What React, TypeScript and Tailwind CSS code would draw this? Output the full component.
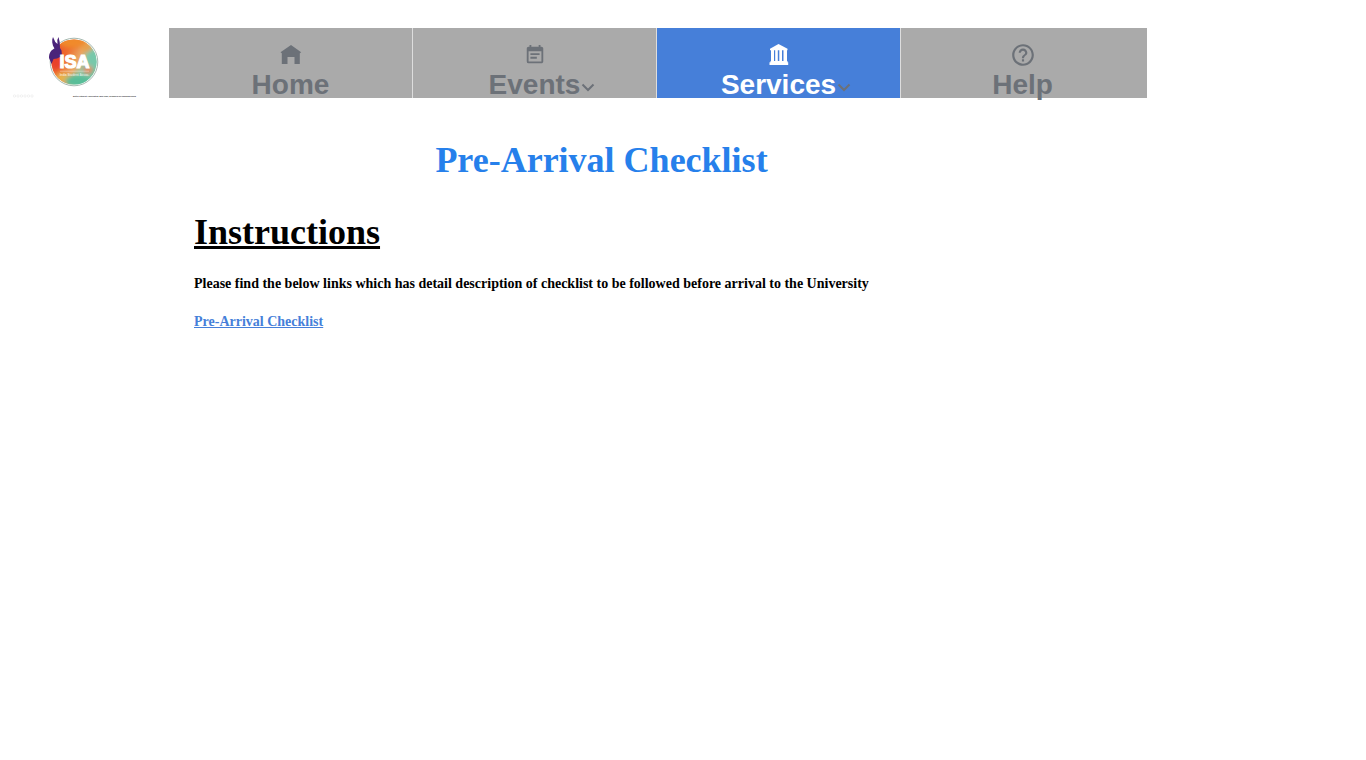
import React from "react";
import { MdEventNote, MdHelpOutline } from "react-icons/md";

function Logo() {
  return (
    <svg viewBox="0 0 169 70" className="block w-full" role="img" aria-label="ISA">
      <defs>
        <clipPath id="disc">
          <circle cx="74" cy="34" r="22.6" />
        </clipPath>
        <linearGradient id="paint" x1="0" y1="0.25" x2="1" y2="0.75">
          <stop offset="0" stopColor="#ec4a2c" />
          <stop offset="0.3" stopColor="#ee6b2f" />
          <stop offset="0.55" stopColor="#e9a765" />
          <stop offset="0.72" stopColor="#8ccbae" />
          <stop offset="1" stopColor="#5fc4a4" />
        </linearGradient>
        <filter id="wash" x="-30%" y="-30%" width="160%" height="160%">
          <feGaussianBlur stdDeviation="2" />
        </filter>
      </defs>
      <circle cx="74" cy="34" r="23.8" fill="#fff" stroke="#8fa79c" strokeWidth="0.8" />
      <g clipPath="url(#disc)">
        <rect x="50" y="10" width="48" height="48" fill="url(#paint)" />
        <g filter="url(#wash)">
          <ellipse cx="72" cy="14" rx="14" ry="6" fill="#f08a2c" />
          <ellipse cx="87" cy="20" rx="6" ry="4" fill="#e9a04b" />
          <ellipse cx="93" cy="30" rx="6" ry="9" fill="#77c8aa" />
          <ellipse cx="56" cy="33" rx="6" ry="9" fill="#e9402c" />
          <ellipse cx="63" cy="50" rx="8" ry="5" fill="#e8b24a" />
          <ellipse cx="78" cy="53" rx="13" ry="6" fill="#58bd98" />
          <ellipse cx="88" cy="42" rx="5" ry="4" fill="#e98b62" />
        </g>
      </g>
      <path
        d="M53 9 L55.300 14 L57.500 16 L57.300 12 L58.500 9 L59.700 14 L60 20 L61.500 22.500 L62 28 L57 30.500 L53.500 31 L51.500 36 L50.500 33.500 L49 30 C49 25 51 22 54.500 20.500 C52 17 51.500 12 53 9Z"
        fill="#4b247a"
      />
      <text x="59.500" y="40" fontSize="18" fontWeight="700" fill="#fff" stroke="#fff" strokeWidth="1.2" fontFamily="'Liberation Sans', Arial, sans-serif">
        ISA
      </text>
      <path d="M60 43.200H89" stroke="#fff" strokeOpacity="0.7" strokeWidth="0.5" />
      <text x="74.500" y="48" textAnchor="middle" fontSize="3" fontWeight="700" fill="#fff" fillOpacity="0.7" fontFamily="'Liberation Sans', sans-serif">
        India Student Assoc.
      </text>
      <g fill="none" stroke="#e4e4e4" strokeWidth="0.5">
        <circle cx="14.500" cy="68" r="1.200" />
        <circle cx="18" cy="68" r="1.200" />
        <circle cx="21.500" cy="68" r="1.200" />
        <circle cx="25" cy="68" r="1.200" />
        <circle cx="28.500" cy="68" r="1.200" />
        <circle cx="32" cy="68" r="1.200" />
      </g>
      <text x="73" y="68.600" fontSize="2" fontWeight="700" fill="#333" fontFamily="'Liberation Sans', sans-serif">
        Better Student Association Web-logo, designed by Sachada Rhoja
      </text>
    </svg>
  );
}

function HomeIcon() {
  return (
    <svg viewBox="0 0 24 24" className="size-6" fill="currentColor" aria-hidden="true">
      <path d="M12 2 L22.200 9.300 L20.800 10.300 V21 H15.500 V14 H8.500 V21 H2.800 V10.300 L1.500 9.300Z" />
    </svg>
  );
}

function ServicesIcon() {
  return (
    <svg viewBox="0 0 24 24" className="size-6" fill="currentColor" aria-hidden="true">
      <path d="M11.500 1 L20.500 5.800 V7.200 H3 V5.800Z" />
      <path d="M4 7 H7 V18.500 H4Z M8.200 7 H10.800 V18.500 H8.200Z M12.300 7 H15 V18.500 H12.300Z M16.500 7 H20 V18.500 H16.500Z" />
      <path d="M3.500 18 H20.500 V19.300 H21.200 V22 H2.500 V19.300 H3.500Z" />
    </svg>
  );
}

function Chevron() {
  return (
    <svg viewBox="0 0 14 10" className="absolute top-3.5 left-full ml-px h-2.5 w-3.5 text-[#6c7178]" fill="none" stroke="currentColor" strokeWidth="2" aria-hidden="true">
      <path d="M1.500 1.500 L7 7 L12.500 1.500" />
    </svg>
  );
}

type Tab = { label: string; icon: React.ReactNode; active?: boolean; menu?: boolean };

const tabs: Tab[] = [
  { label: "Home", icon: <HomeIcon /> },
  { label: "Events", icon: <MdEventNote className="size-[22px]" />, menu: true },
  { label: "Services", icon: <ServicesIcon />, active: true, menu: true },
  { label: "Help", icon: <MdHelpOutline className="size-[26px]" /> },
];

export default function App() {
  return (
    <div className="min-h-screen bg-white pt-7 text-black">
      <header className="flex items-start">
        <a href="#" className="w-[169px] shrink-0">
          <Logo />
        </a>
        <nav className="flex h-[70px] max-w-[978px] flex-1 bg-[#aaaaaa] pr-0.5 font-['Liberation_Sans',Arial,sans-serif]">
          {tabs.map((tab) => (
            <a
              key={tab.label}
              href="#"
              aria-current={tab.active ? "page" : undefined}
              className={
                "flex flex-1 flex-col items-center border-r border-[#dddddd] pt-3.5 last:border-transparent " +
                (tab.active ? "bg-[#467fd9] text-white" : "text-[#6c7178]")
              }
            >
              <span className="flex h-[26px] shrink-0 items-center">{tab.icon}</span>
              <span className="relative mt-px shrink-0 text-[28px] leading-8 font-bold">
                {tab.label}
                {tab.menu && <Chevron />}
              </span>
            </a>
          ))}
        </nav>
      </header>
      <main className="ml-[194px] max-w-[815px] pt-[42px] font-['Liberation_Serif','Times_New_Roman',serif] font-bold">
        <h1 className="text-center text-4xl text-[#2680eb]">Pre-Arrival Checklist</h1>
        <h2 className="mt-8 text-4xl underline">Instructions</h2>
        <p className="mt-[22px] text-sm">
          Please find the below links which has detail description of checklist to be followed before arrival to the University
        </p>
        <p className="mt-[18px] text-sm">
          <a href="#" className="text-[#467fd9] underline">
            Pre-Arrival Checklist
          </a>
        </p>
      </main>
    </div>
  );
}
